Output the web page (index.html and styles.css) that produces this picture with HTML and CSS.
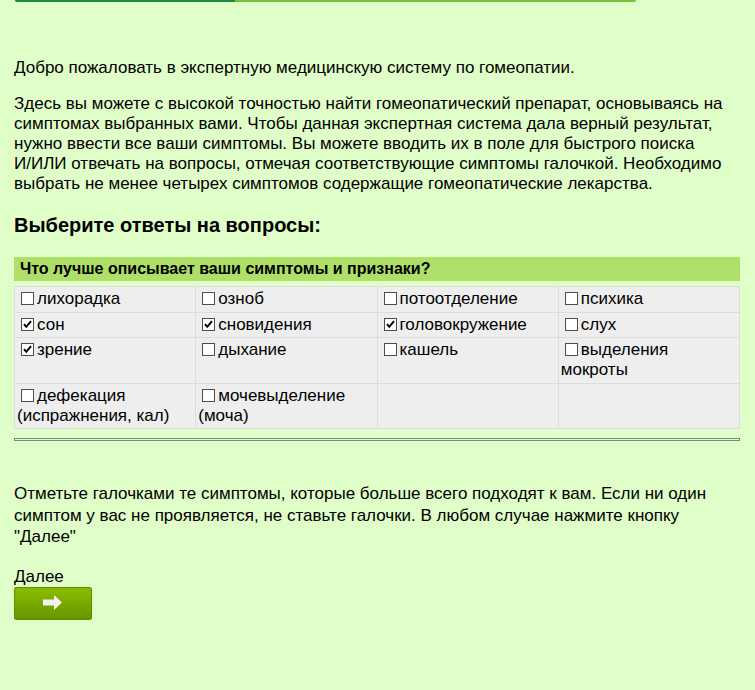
FILE: index.html
```
<!DOCTYPE html>
<html lang="ru">
<head>
<meta charset="utf-8">
<title>Гомеопатия</title>
<link rel="stylesheet" href="styles.css">
</head>
<body>
<div class="progress"><div class="progress-fill"></div></div>
<main class="page">
  <p class="intro">Добро пожаловать в экспертную медицинскую систему по гомеопатии.</p>
  <p class="text">Здесь вы можете с высокой точностью найти гомеопатический препарат, основываясь на симптомах выбранных вами. Чтобы данная экспертная система дала верный результат, нужно ввести все ваши симптомы. Вы можете вводить их в поле для быстрого поиска <span class="nowrap">И/ИЛИ</span> отвечать на вопросы, отмечая соответствующие симптомы галочкой. Необходимо выбрать не менее четырех симптомов содержащие гомеопатические лекарства.</p>
  <h3 class="title">Выберите ответы на вопросы:</h3>
  <div class="question">Что лучше описывает ваши симптомы и признаки?</div>
  <table class="grid">
    <tr>
      <td><span class="cb"></span>лихорадка</td>
      <td><span class="cb"></span>озноб</td>
      <td><span class="cb"></span>потоотделение</td>
      <td><span class="cb"></span>психика</td>
    </tr>
    <tr>
      <td><span class="cb"><svg viewBox="0 0 11 11"><path d="M2 5.2 L4.3 7.8 L9 2.2"/></svg></span>сон</td>
      <td><span class="cb"><svg viewBox="0 0 11 11"><path d="M2 5.2 L4.3 7.8 L9 2.2"/></svg></span>сновидения</td>
      <td><span class="cb"><svg viewBox="0 0 11 11"><path d="M2 5.2 L4.3 7.8 L9 2.2"/></svg></span>головокружение</td>
      <td><span class="cb"></span>слух</td>
    </tr>
    <tr>
      <td><span class="cb"><svg viewBox="0 0 11 11"><path d="M2 5.2 L4.3 7.8 L9 2.2"/></svg></span>зрение</td>
      <td><span class="cb"></span>дыхание</td>
      <td><span class="cb"></span>кашель</td>
      <td><span class="cb"></span>выделения мокроты</td>
    </tr>
    <tr>
      <td><span class="cb"></span>дефекация (испражнения, кал)</td>
      <td><span class="cb"></span>мочевыделение (моча)</td>
      <td></td>
      <td></td>
    </tr>
  </table>
  <div class="sep"></div>
  <p class="note">Отметьте галочками те симптомы, которые больше всего подходят к вам. Если ни один симптом у вас не проявляется, не ставьте галочки. В любом случае нажмите кнопку "Далее"</p>
  <div class="next-label">Далее</div>
  <button class="next-btn" type="button" aria-label="Далее">
    <svg viewBox="0 0 20 16" width="20" height="16"><polygon points="0,4.5 11,4.5 11,0 19,7.5 11,15 11,10.5 0,10.5" fill="#f2f2f2"/></svg>
  </button>
</main>
</body>
</html>
```

FILE: styles.css
```
html, body {
  margin: 0;
  padding: 0;
}
body {
  background: #e0fec8;
  font-family: "Liberation Sans", Arial, sans-serif;
  font-size: 17px;
  color: #000;
}
.nowrap {
  white-space: nowrap;
}
.progress {
  margin-left: 15px;
  width: 621px;
  height: 2px;
  background: #7bbf43;
  border-radius: 0 0 2px 2px;
  overflow: hidden;
}
.progress-fill {
  width: 220px;
  height: 100%;
  background: #1f8b3b;
}
.page {
  padding: 0 15px 40px 14px;
  width: 726px;
}
.intro {
  margin: 56px 0 0;
  line-height: 20px;
}
.text {
  margin: 16px 0 0;
  line-height: 20px;
}
.title {
  margin: 20px 0 0;
  font-size: 20px;
  line-height: 23px;
  font-weight: bold;
}
.question {
  margin-top: 20px;
  background: #addf69;
  font-size: 16px;
  font-weight: bold;
  line-height: 20px;
  padding: 2px 6px;
}
.grid {
  margin-top: 5px;
  width: 100%;
  table-layout: fixed;
  border-collapse: collapse;
  background: #eeeeee;
}
.grid td {
  width: 25%;
  border: 1px solid #dcdcdc;
  padding: 2px 2px 2.5px;
  line-height: 20px;
  vertical-align: top;
}
.cb {
  display: inline-block;
  box-sizing: border-box;
  width: 13px;
  height: 13px;
  border: 1px solid #4d4d4d;
  background: #fff;
  margin: 0 3px 0 4px;
  vertical-align: -1px;
}
.cb svg {
  display: block;
  width: 11px;
  height: 11px;
}
.cb svg path {
  fill: none;
  stroke: #000;
  stroke-width: 2;
}
.sep {
  margin-top: 9px;
  height: 1px;
  border: 1px solid #7c8878;
}
.note {
  margin: 42px 0 0;
  line-height: 21.5px;
}
.next-label {
  margin-top: 19px;
  line-height: 20px;
}
.next-btn {
  display: flex;
  align-items: center;
  justify-content: center;
  margin-top: 0;
  width: 78px;
  height: 33px;
  padding: 0;
  border: 1px solid #5f8c00;
  border-radius: 2px;
  background: linear-gradient(#8bbb00, #679700);
  cursor: pointer;
}
```
